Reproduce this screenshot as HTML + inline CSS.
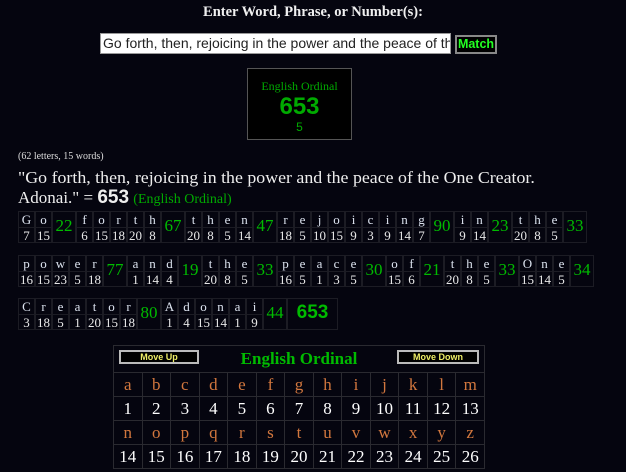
<!DOCTYPE html>
<html><head><meta charset="utf-8"><style>
*{margin:0;padding:0;box-sizing:border-box}
body{width:626px;height:472px;background:#05050f;color:#eee;font-family:"Liberation Serif",serif;position:relative;overflow:hidden}
.abs{position:absolute}
.hdr{top:4px;left:0;width:626px;text-align:center;font-weight:bold;font-size:14.5px;color:#f0f0f0}
.inp{left:100px;top:33px;width:351px;height:21px;background:#fff;border:1px solid #999;color:#222;font-family:"Liberation Sans",sans-serif;font-size:14px;line-height:19px;padding-left:2px;white-space:nowrap;overflow:hidden}
.btn{left:455px;top:35px;width:42px;height:19px;background:#000;border:2px solid #888;color:#2f2;font-family:"Liberation Sans",sans-serif;font-weight:bold;font-size:12.5px;text-align:center;line-height:15px}
.box{left:247px;top:68px;width:105px;height:72px;border:1px solid #555;background:#000;text-align:center;color:#0a0}
.wr{position:absolute;left:18px;display:flex}
.w{display:flex}
.c{width:17px;border:1px solid #1c1c24;display:flex;flex-direction:column}
.c span{height:15px;text-align:center;font-size:13px;line-height:15px;color:#dde4f0}
.c span+span{border-top:1px solid #1c1c24;color:#e8e8e8}
.s{width:24px;border:1px solid #1c1c24;color:#0b0;font-size:17px;text-align:center;line-height:28px}
table.eo{position:absolute;left:113px;top:345px;width:372px;border-collapse:collapse}
.eo td{border:1px solid #2a2a30;text-align:center;font-size:17px;height:24px;color:#fff}
.eo tr.l td{color:#d2773e}
.mb{position:absolute;top:4px;width:80px;height:14px;background:#000;border:2px solid #bbb;color:#ee6;font-family:"Liberation Sans",sans-serif;font-weight:bold;font-size:9px;text-align:center;line-height:10px}
</style></head><body>
<div class="abs hdr">Enter Word, Phrase, or Number(s):</div>
<div class="abs inp">Go forth, then, rejoicing in the power and the peace of the One Creator. Adonai.</div>
<div class="abs btn">Match</div>
<div class="abs box"><div style="font-size:12px;margin-top:10px">English Ordinal</div><div style="font-family:'Liberation Sans',sans-serif;font-weight:bold;font-size:24px;line-height:26px">653</div><div style="font-family:'Liberation Sans',sans-serif;font-size:12px">5</div></div>
<div class="abs" style="left:18px;top:151px;font-size:10px;color:#ddd">(62 letters, 15 words)</div>
<div class="abs" style="left:18px;top:168px;font-size:17px;line-height:20px;color:#eee;white-space:nowrap"><span style="display:inline-block;transform:scaleX(1.05);transform-origin:left">"Go forth, then, rejoicing in the power and the peace of the One Creator.</span><br>Adonai." = <b style="font-family:'Liberation Sans',sans-serif;font-size:19px">653</b> <span style="color:#0a0;font-size:14px">(English Ordinal)</span></div>

<div class="wr" style="top:211px">
<div class="w"><div class="c"><span>G</span><span>7</span></div><div class="c"><span>o</span><span>15</span></div><div class="s">22</div></div>
<div class="w"><div class="c"><span>f</span><span>6</span></div><div class="c"><span>o</span><span>15</span></div><div class="c"><span>r</span><span>18</span></div><div class="c"><span>t</span><span>20</span></div><div class="c"><span>h</span><span>8</span></div><div class="s">67</div></div>
<div class="w"><div class="c"><span>t</span><span>20</span></div><div class="c"><span>h</span><span>8</span></div><div class="c"><span>e</span><span>5</span></div><div class="c"><span>n</span><span>14</span></div><div class="s">47</div></div>
<div class="w"><div class="c"><span>r</span><span>18</span></div><div class="c"><span>e</span><span>5</span></div><div class="c"><span>j</span><span>10</span></div><div class="c"><span>o</span><span>15</span></div><div class="c"><span>i</span><span>9</span></div><div class="c"><span>c</span><span>3</span></div><div class="c"><span>i</span><span>9</span></div><div class="c"><span>n</span><span>14</span></div><div class="c"><span>g</span><span>7</span></div><div class="s">90</div></div>
<div class="w"><div class="c"><span>i</span><span>9</span></div><div class="c"><span>n</span><span>14</span></div><div class="s">23</div></div>
<div class="w"><div class="c"><span>t</span><span>20</span></div><div class="c"><span>h</span><span>8</span></div><div class="c"><span>e</span><span>5</span></div><div class="s">33</div></div>
</div>

<div class="wr" style="top:255px">
<div class="w"><div class="c"><span>p</span><span>16</span></div><div class="c"><span>o</span><span>15</span></div><div class="c"><span>w</span><span>23</span></div><div class="c"><span>e</span><span>5</span></div><div class="c"><span>r</span><span>18</span></div><div class="s">77</div></div>
<div class="w"><div class="c"><span>a</span><span>1</span></div><div class="c"><span>n</span><span>14</span></div><div class="c"><span>d</span><span>4</span></div><div class="s">19</div></div>
<div class="w"><div class="c"><span>t</span><span>20</span></div><div class="c"><span>h</span><span>8</span></div><div class="c"><span>e</span><span>5</span></div><div class="s">33</div></div>
<div class="w"><div class="c"><span>p</span><span>16</span></div><div class="c"><span>e</span><span>5</span></div><div class="c"><span>a</span><span>1</span></div><div class="c"><span>c</span><span>3</span></div><div class="c"><span>e</span><span>5</span></div><div class="s">30</div></div>
<div class="w"><div class="c"><span>o</span><span>15</span></div><div class="c"><span>f</span><span>6</span></div><div class="s">21</div></div>
<div class="w"><div class="c"><span>t</span><span>20</span></div><div class="c"><span>h</span><span>8</span></div><div class="c"><span>e</span><span>5</span></div><div class="s">33</div></div>
<div class="w"><div class="c"><span>O</span><span>15</span></div><div class="c"><span>n</span><span>14</span></div><div class="c"><span>e</span><span>5</span></div><div class="s">34</div></div>
</div>

<div class="wr" style="top:298px">
<div class="w"><div class="c"><span>C</span><span>3</span></div><div class="c"><span>r</span><span>18</span></div><div class="c"><span>e</span><span>5</span></div><div class="c"><span>a</span><span>1</span></div><div class="c"><span>t</span><span>20</span></div><div class="c"><span>o</span><span>15</span></div><div class="c"><span>r</span><span>18</span></div><div class="s">80</div></div>
<div class="w"><div class="c"><span>A</span><span>1</span></div><div class="c"><span>d</span><span>4</span></div><div class="c"><span>o</span><span>15</span></div><div class="c"><span>n</span><span>14</span></div><div class="c"><span>a</span><span>1</span></div><div class="c"><span>i</span><span>9</span></div><div class="s">44</div></div>
<div class="s" style="width:51px;font-family:'Liberation Sans',sans-serif;font-weight:bold;font-size:19px;line-height:28px;color:#0b0">653</div>
</div>

<table class="eo">
<tr><td colspan="13" style="height:27px;position:relative"><div class="mb" style="left:5px">Move Up</div><span style="color:#0b0;font-weight:bold;font-size:17px">English Ordinal</span><div class="mb" style="right:5px;width:82px">Move Down</div></td></tr>
<tr class="l"><td>a</td><td>b</td><td>c</td><td>d</td><td>e</td><td>f</td><td>g</td><td>h</td><td>i</td><td>j</td><td>k</td><td>l</td><td>m</td></tr>
<tr><td>1</td><td>2</td><td>3</td><td>4</td><td>5</td><td>6</td><td>7</td><td>8</td><td>9</td><td>10</td><td>11</td><td>12</td><td>13</td></tr>
<tr class="l"><td>n</td><td>o</td><td>p</td><td>q</td><td>r</td><td>s</td><td>t</td><td>u</td><td>v</td><td>w</td><td>x</td><td>y</td><td>z</td></tr>
<tr><td>14</td><td>15</td><td>16</td><td>17</td><td>18</td><td>19</td><td>20</td><td>21</td><td>22</td><td>23</td><td>24</td><td>25</td><td>26</td></tr>
</table>
</body></html>
